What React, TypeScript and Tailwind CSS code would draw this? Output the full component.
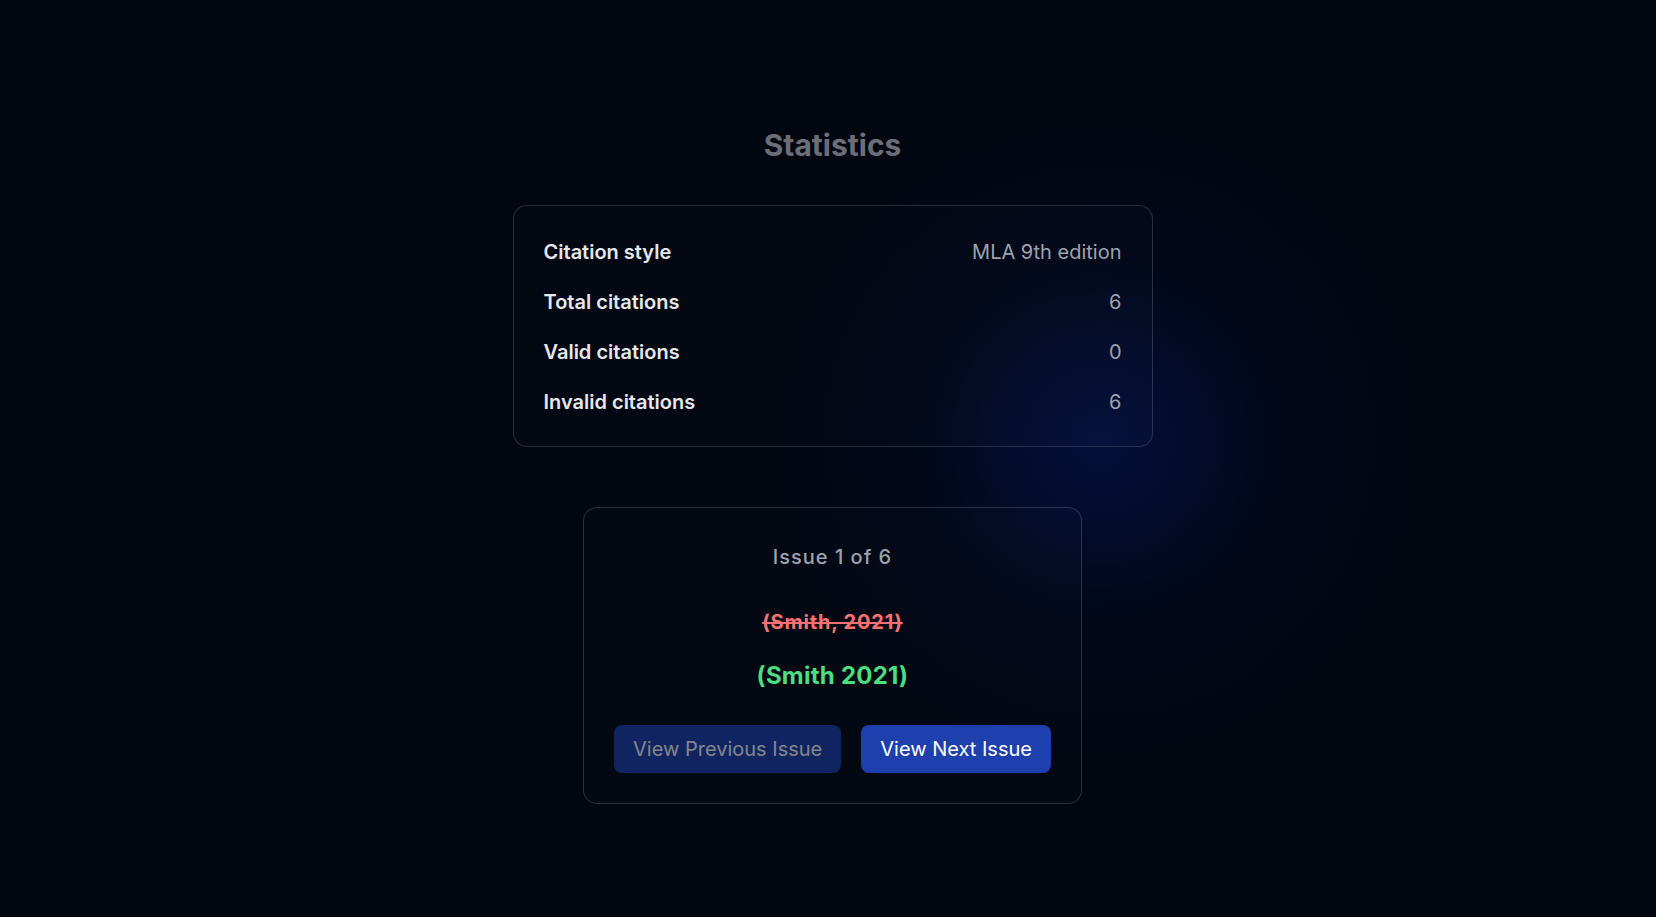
const rows = [
  { label: "Citation style", value: "MLA 9th edition" },
  { label: "Total citations", value: "6" },
  { label: "Valid citations", value: "0" },
  { label: "Invalid citations", value: "6" },
];

export default function App() {
  return (
    <div
      className="min-h-screen w-full flex flex-col items-center justify-center pl-[9px] pt-[14px] bg-[#010611] bg-[radial-gradient(circle_at_1100px_440px,rgba(8,28,110,0.45)_0px,rgba(4,14,60,0.2)_180px,transparent_320px)]"
      style={{ fontFamily: "Inter, 'Noto Sans', sans-serif" }}
    >
      <h1 className="text-3xl leading-9 font-bold text-[#6b6e77]">
        Statistics
      </h1>

      <div className="mt-[42px] w-[640px] rounded-[14px] border border-white/15 bg-white/[0.012] px-[30px] pt-[32px] pb-[30px] flex flex-col gap-[22px]">
        {rows.map((r) => (
          <div key={r.label} className="flex justify-between text-xl leading-7">
            <span className="font-semibold text-[#e5e7eb]">{r.label}</span>
            <span className="text-[#9ca3af]">{r.value}</span>
          </div>
        ))}
      </div>

      <div className="mt-[60px] rounded-[14px] border border-white/15 bg-white/[0.012] px-[30px] pt-[35px] pb-[30px] flex flex-col items-center">
        <span className="text-xl leading-7 font-medium tracking-[0.05em] text-[#9ca3af]">
          Issue 1 of 6
        </span>
        <span className="mt-[37px] text-xl leading-7 font-bold tracking-[0.04em] text-[#f87171] line-through">
          (Smith, 2021)
        </span>
        <span className="mt-[24px] text-2xl leading-8 font-bold tracking-[0.01em] text-[#4ade80]">
          (Smith 2021)
        </span>
        <div className="mt-[33px] flex gap-5">
          <button className="rounded-lg bg-[#1e40af] px-[19px] py-[10px] text-xl leading-7 text-white opacity-50">
            View Previous Issue
          </button>
          <button className="rounded-lg bg-[#1e40af] px-[19px] py-[10px] text-xl leading-7 text-white">
            View Next Issue
          </button>
        </div>
      </div>
    </div>
  );
}
